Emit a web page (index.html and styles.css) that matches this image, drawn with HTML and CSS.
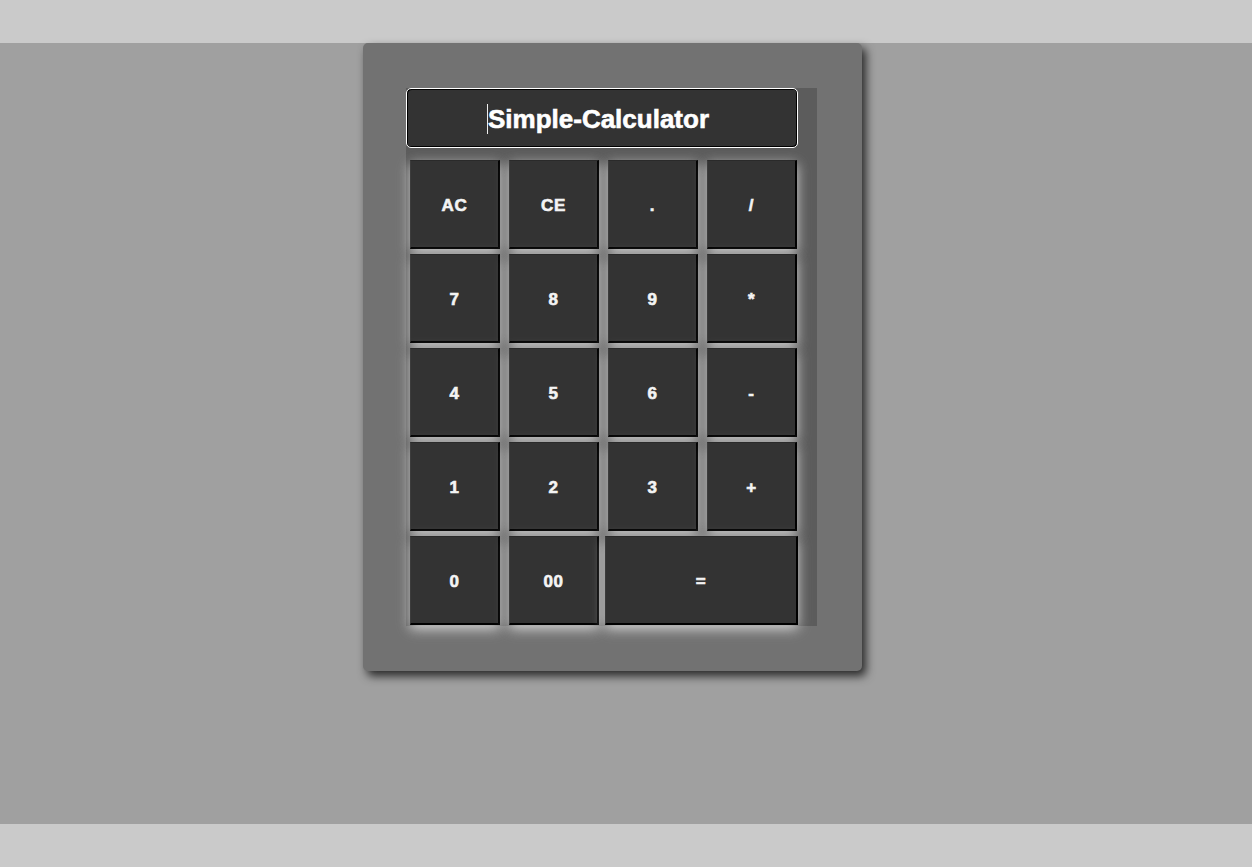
FILE: index.html
```html
<!DOCTYPE html>
<html>
<head>
<meta charset="utf-8">
<title>Simple-Calculator</title>
<link rel="stylesheet" href="styles.css">
</head>
<body>
<main class="band">
  <section class="card">
    <div class="calc">
      <div class="display"><span class="caret"></span>Simple-Calculator</div>
      <div class="keys">
        <button class="key">AC</button>
        <button class="key">CE</button>
        <button class="key">.</button>
        <button class="key">/</button>
        <button class="key">7</button>
        <button class="key">8</button>
        <button class="key">9</button>
        <button class="key">*</button>
        <button class="key">4</button>
        <button class="key">5</button>
        <button class="key">6</button>
        <button class="key">-</button>
        <button class="key">1</button>
        <button class="key">2</button>
        <button class="key">3</button>
        <button class="key">+</button>
        <button class="key">0</button>
        <button class="key">00</button>
        <button class="key key-wide">=</button>
      </div>
    </div>
  </section>
</main>
</body>
</html>
```
FILE: styles.css
```css
html, body {
  margin: 0;
  padding: 0;
}
body {
  background: #cacaca;
  font-family: "Liberation Sans", Arial, sans-serif;
  height: 867px;
  padding-top: 43px;
  box-sizing: border-box;
}
.band {
  background: #a0a0a0;
  height: 781px;
  display: flex;
  align-items: flex-start;
  padding-left: 363px;
}
.card {
  width: 499px;
  height: 628px;
  box-sizing: border-box;
  background: #727272;
  border-radius: 5px;
  box-shadow: 4px 5px 10px rgba(0, 0, 0, 0.75);
  padding: 45px 45px 45px 43px;
}
.calc {
  width: 411px;
  height: 538px;
  background: #5c5c5c;
}
.display {
  width: 392px;
  height: 60px;
  box-sizing: border-box;
  background: #333333;
  border: 1px solid #ffffff;
  border-radius: 5px;
  box-shadow: inset -1px -1px 0 #000, inset 1px 1px 0 #000;
  color: #ffffff;
  font-size: 26px;
  font-weight: bold;
  -webkit-text-stroke: 0.6px #ffffff;
  display: flex;
  align-items: center;
  justify-content: center;
  padding: 2px 8px 0 0;
}
.caret {
  display: inline-block;
  width: 1px;
  height: 30px;
  background: #eeeeee;
  margin-right: 0;
}
.keys {
  margin-top: 12px;
  display: grid;
  grid-template-columns: repeat(4, 99px);
  grid-auto-rows: 94px;
}
.key {
  margin: 0 5px 5px 4px;
  width: 90px;
  height: 89px;
  box-sizing: border-box;
  background: #333333;
  color: #f4f4f4;
  font-family: "Liberation Sans", Arial, sans-serif;
  font-size: 17px;
  font-weight: bold;
  letter-spacing: 0.6px;
  -webkit-text-stroke: 0.6px #f4f4f4;
  border-style: solid;
  border-width: 1px 2px 2px 1px;
  border-color: #2a2a2a #000000 #000000 #3c3c3c;
  padding: 3px 0 0 0;
  box-shadow: 0 4px 12px rgba(235, 235, 235, 0.8);
  cursor: pointer;
}
.key-wide {
  grid-column: span 2;
  width: 193px;
  margin-left: 1px;
}
```
